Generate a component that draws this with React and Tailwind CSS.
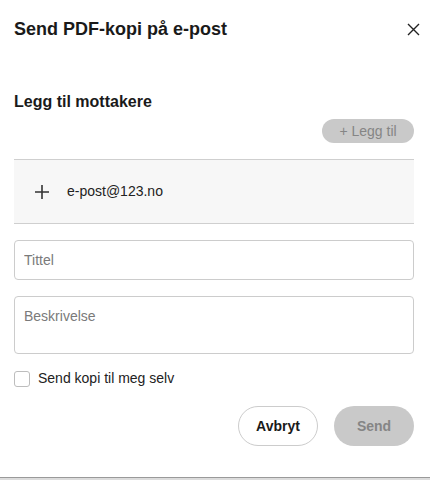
export default function App() {
  return (
    <div className="flex h-[480px] w-[430px] flex-col bg-white text-[#222]" style={{ fontFamily: '"Liberation Sans", Arial, sans-serif' }}>
      <div className="flex-1 pl-[14px] pr-[16px]">
        <div className="flex h-[58px] items-center justify-between pt-[1px]">
          <h1 className="text-[18px] font-bold text-[#1a1a1a]">Send PDF-kopi på e-post</h1>
          <button className="mr-[-11px] flex h-6 w-6 items-center justify-center text-[#222]">
            <svg width="13" height="13" viewBox="0 0 13 13" fill="none" stroke="currentColor" strokeWidth="1.4">
              <path d="M1 1L12 12M12 1L1 12" />
            </svg>
          </button>
        </div>
        <h2 className="mt-[33px] text-[16px] font-bold leading-[22px] text-[#1a1a1a]">Legg til mottakere</h2>
        <div className="mt-[6px] flex justify-end">
          <button className="h-6 w-[92px] rounded-full bg-[#c9c9c9] text-[14px] text-[#858585]">+ Legg til</button>
        </div>
        <div className="mt-[16px] flex h-[65px] items-center border-y border-[#cfcfcf] bg-[#f7f7f7] pl-[21px]">
          <svg width="14" height="14" viewBox="0 0 14 14" fill="none" stroke="#333" strokeWidth="1.6">
            <path d="M7 0V14M0 7H14" />
          </svg>
          <span className="ml-[18px] text-[14px] text-[#222]">e-post@123.no</span>
        </div>
        <input
          placeholder="Tittel"
          className="mt-[16px] block h-[40px] w-full rounded-[4px] border border-[#cccccc] px-[9px] text-[14px] placeholder:text-[#7a7a7a] outline-none"
        />
        <textarea
          placeholder="Beskrivelse"
          className="mt-[16px] block h-[58px] w-full resize-none rounded-[4px] border border-[#cccccc] px-[9px] pt-[9px] text-[14px] placeholder:text-[#7a7a7a] outline-none"
        />
        <label className="mt-[14px] flex items-center">
          <span className="h-4 w-4 rounded-[3px] border border-[#bdbdbd] bg-white" />
          <span className="ml-[8px] text-[14px] text-[#222]">Send kopi til meg selv</span>
        </label>
        <div className="mt-[17px] flex justify-end gap-4">
          <button className="h-[40px] w-[80px] rounded-full border border-[#cccccc] bg-white text-[14px] font-bold text-[#1a1a1a]">Avbryt</button>
          <button className="h-[40px] w-[80px] rounded-full bg-[#c9c9c9] text-[14px] font-bold text-[#858585]">Send</button>
        </div>
      </div>
      <div className="h-[1px] bg-[#9a9a9a]" />
      <div className="h-[2px] bg-[#dcdcdc]" />
    </div>
  );
}
